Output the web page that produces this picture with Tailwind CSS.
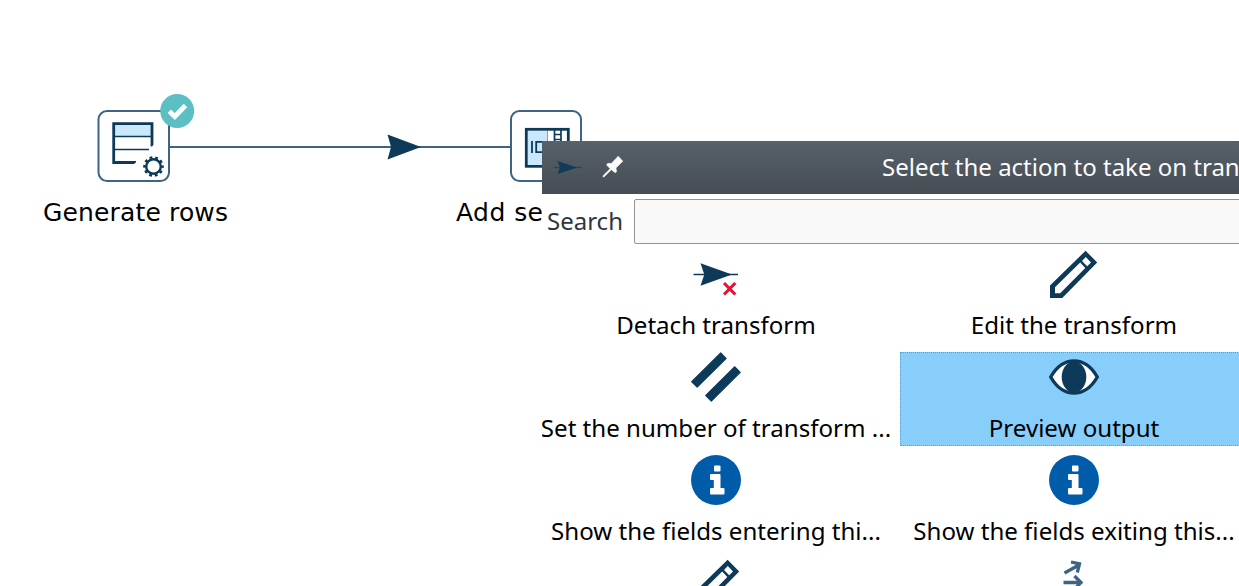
<!DOCTYPE html>
<html lang="en">
<head>
<meta charset="utf-8">
<title>Pipeline editor</title>
<script src="https://cdn.jsdelivr.net/npm/@tailwindcss/browser@4"></script>
</head>
<body class="relative h-[586px] w-[1239px] overflow-hidden bg-white font-['Noto_Sans',sans-serif] text-black">
<svg class="absolute inset-0" width="1239" height="586" viewBox="0 0 1239 586">
  <!-- hop -->
  <path d="M169 147H511" stroke="#3d6482" stroke-width="2"/>
  <path d="M387.500 134.500L421 147L387.500 159.500L391 147Z" fill="#0e3a5a"/>
  <!-- generate rows -->
  <rect x="98.500" y="111" width="70.500" height="70" rx="8.500" fill="#fff" stroke="#3d6482" stroke-width="2"/>
  <path d="M114 124H152V136H114Z" fill="#c9e8fb"/>
  <path d="M114 136.500H152M114 149.500H149" stroke="#0e3a5a" stroke-width="1.300"/>
  <path d="M152 146.500V123.700H113.700V162.500H136" fill="none" stroke="#0e3a5a" stroke-width="2.800"/>
  <path d="M149.500 149L154 144.500V149ZM134 164L137.500 161V164Z" fill="#fff"/>
  <circle cx="153.500" cy="166.500" r="7.300" fill="none" stroke="#0e3a5a" stroke-width="2.400"/>
  <circle cx="153.500" cy="166.500" r="9" fill="none" stroke="#0e3a5a" stroke-width="2.600" stroke-dasharray="2.800 2.855" stroke-dashoffset="1.400"/>
  <circle cx="177.200" cy="111" r="17" fill="#5bbfc4"/>
  <path d="M169.300 111.200L174.800 116.500L185.500 105.500" fill="none" stroke="#fff" stroke-width="4.800"/>
  <!-- add sequence -->
  <rect x="511" y="111" width="70" height="70" rx="8.500" fill="#fff" stroke="#3d6482" stroke-width="2"/>
  <rect x="526.300" y="129.300" width="42" height="37" fill="#fff" stroke="#0e3a5a" stroke-width="2.800"/>
  <path d="M528 131H547.500V165H528Z" fill="#c9e8fb"/>
  <path d="M547.500 131V165" stroke="#7fa3bb" stroke-width="1"/>
  <path d="M554.500 130V142M561 130V142M554 134.500H561M554 139.500H561" stroke="#0e3a5a" stroke-width="1.700"/>
  <path d="M532 141V153M536.200 141.800H545V152.200H536.200Z" fill="none" stroke="#0e3a5a" stroke-width="1.800"/>
  <text x="43" y="221" font-size="25" font-family="DejaVu Sans" textLength="185">Generate rows</text>
  <text x="456" y="221" font-size="25" font-family="DejaVu Sans" textLength="87">Add se</text>
</svg>

<section class="absolute left-[542px] top-[141px] flex h-[445px] w-[697px] flex-col overflow-hidden bg-white">
  <header class="flex h-[53px] shrink-0 items-center bg-linear-to-b from-[#566169] to-[#474d54] text-[24px] text-[#fcfcfc]">
    <svg class="shrink-0" width="88" height="53" viewBox="0 0 88 53">
      <path d="M12 26.500H40" stroke="#1d4765" stroke-width="1.300"/>
      <path d="M15.500 20L35 26.500L15.500 33L18 26.500Z" fill="#123b5a"/>
      <path d="M76.200 15.200L80.800 20.200L73.900 27L74.600 30.500L73.400 31.800L69.300 28.700L62.200 35.800L61 36L61.200 34.600L68.200 27.700L64.500 23.700L66 22.300L69.300 22.500Z" fill="#fcfcfc" stroke="#fcfcfc" stroke-width=".6"/>
    </svg>
    <h1 class="ml-[252px] pb-[2px] whitespace-nowrap">Select the action to take on tran</h1>
  </header>
  <div class="flex h-[55px] w-[706px] shrink-0 items-start pl-[5px] pt-[5px]">
    <label for="q" class="w-[87px] text-[24px] leading-[44px] text-[#31363b]">Search</label>
    <input id="q" class="h-[45px] flex-1 rounded-[2px] border border-[#929495] bg-[#f9f9f9]">
  </div>
  <ul class="grid grid-cols-[348px_348px] gap-x-[10px] gap-y-[9px] text-[24.1px] leading-[34px] whitespace-nowrap">
    <li class="flex h-[94px] flex-col items-center gap-[8px] pt-px">
      <svg class="shrink-0" width="50" height="50" viewBox="0 0 50 50">
        <path d="M2.500 24.500H47" stroke="#0e3a5a" stroke-width="1.300"/>
        <path d="M9.500 13.200L41 24.500L9.500 35.700L13.300 24.500Z" fill="#0e3a5a"/>
        <path d="M33 33L44.300 44.500M44.300 33L33 44.500" stroke="#e81334" stroke-width="3.200"/>
      </svg>
      <span>Detach transform</span>
    </li>
    <li class="flex h-[94px] flex-col items-center gap-[8px] pt-px">
      <svg class="shrink-0" width="50" height="50" viewBox="0 0 50 50">
        <path fill="#0e3a5a" fill-rule="evenodd" d="M36.600 .7L48.200 12.500L13.200 48H1V35.500ZM31.200 12.600L6 37.300V43.300H11.200L36.300 18.100ZM36.800 7L33 10.900L38.200 16.200L42 12.400Z"/>
      </svg>
      <span>Edit the transform</span>
    </li>
    <li class="flex h-[94px] flex-col items-center gap-[9px]">
      <svg class="shrink-0" width="50" height="50" viewBox="0 0 50 50">
        <path fill="#0e3a5a" stroke="#0e3a5a" stroke-width="1.200" stroke-linejoin="round" d="M29.700 .9L35 6.500L6.200 35L.7 29.700ZM43.800 14.800L49.200 20.300L20.300 49L14.800 43.500Z"/>
      </svg>
      <span>Set the number of transform ...</span>
    </li>
    <li class="flex h-[94px] flex-col items-center gap-[9px] bg-[#87cefa] outline outline-dotted -outline-offset-1 outline-[#48a6df]">
      <svg class="shrink-0" width="50" height="50" viewBox="0 0 50 50">
        <path d="M1.700 25C14 3.500 36 3.500 48.300 25C36 46.500 14 46.500 1.700 25Z" fill="#fff" stroke="#0e3a5a" stroke-width="3.400" stroke-linejoin="round"/>
        <ellipse cx="25" cy="25" rx="12.300" ry="15.500" fill="#0e3a5a"/>
      </svg>
      <span>Preview output</span>
    </li>
    <li class="flex h-[94px] flex-col items-center gap-[9px]">
      <svg class="shrink-0" width="50" height="50" viewBox="0 0 50 50">
        <circle cx="25" cy="25" r="25" fill="#005ca9"/>
        <path d="M24 10.500H28.500Q29.500 10.500 29.500 11.500V15.500Q29.500 16.500 28.500 16.500H24Q23 16.500 23 15.500V11.500Q23 10.500 24 10.500ZM20 19H28.500Q29.500 19 29.500 20V33H32.500Q33.500 33 33.500 34V38.500Q33.500 39.500 32.500 39.500H20Q19 39.500 19 38.500V34Q19 33 20 33H22.800V25H20Q19 25 19 24V20Q19 19 20 19Z" fill="#fff"/>
      </svg>
      <span>Show the fields entering thi...</span>
    </li>
    <li class="flex h-[94px] flex-col items-center gap-[9px]">
      <svg class="shrink-0" width="50" height="50" viewBox="0 0 50 50">
        <circle cx="25" cy="25" r="25" fill="#005ca9"/>
        <path d="M24 10.500H28.500Q29.500 10.500 29.500 11.500V15.500Q29.500 16.500 28.500 16.500H24Q23 16.500 23 15.500V11.500Q23 10.500 24 10.500ZM20 19H28.500Q29.500 19 29.500 20V33H32.500Q33.500 33 33.500 34V38.500Q33.500 39.500 32.500 39.500H20Q19 39.500 19 38.500V34Q19 33 20 33H22.800V25H20Q19 25 19 24V20Q19 19 20 19Z" fill="#fff"/>
      </svg>
      <span>Show the fields exiting this...</span>
    </li>
    <li class="flex flex-col items-center pt-px">
      <svg class="shrink-0" width="50" height="50" viewBox="0 0 50 50">
        <path fill="#0e3a5a" fill-rule="evenodd" d="M36.600 .7L48.200 12.500L13.200 48H1V35.500ZM31.200 12.600L6 37.300V43.300H11.200L36.300 18.100ZM36.800 7L33 10.900L38.200 16.200L42 12.400Z"/>
      </svg>
    </li>
    <li class="flex flex-col items-center">
      <svg class="shrink-0" width="50" height="50" viewBox="0 0 50 50" fill="none" stroke="#3d6482" stroke-width="3.300">
        <path d="M15.500 15L30 7M22 4L30.500 5.800L28.300 14.500M14.500 24.500H32M25.500 18L32 24.500L25.500 31"/>
      </svg>
    </li>
  </ul>
</section>
</body>
</html>
